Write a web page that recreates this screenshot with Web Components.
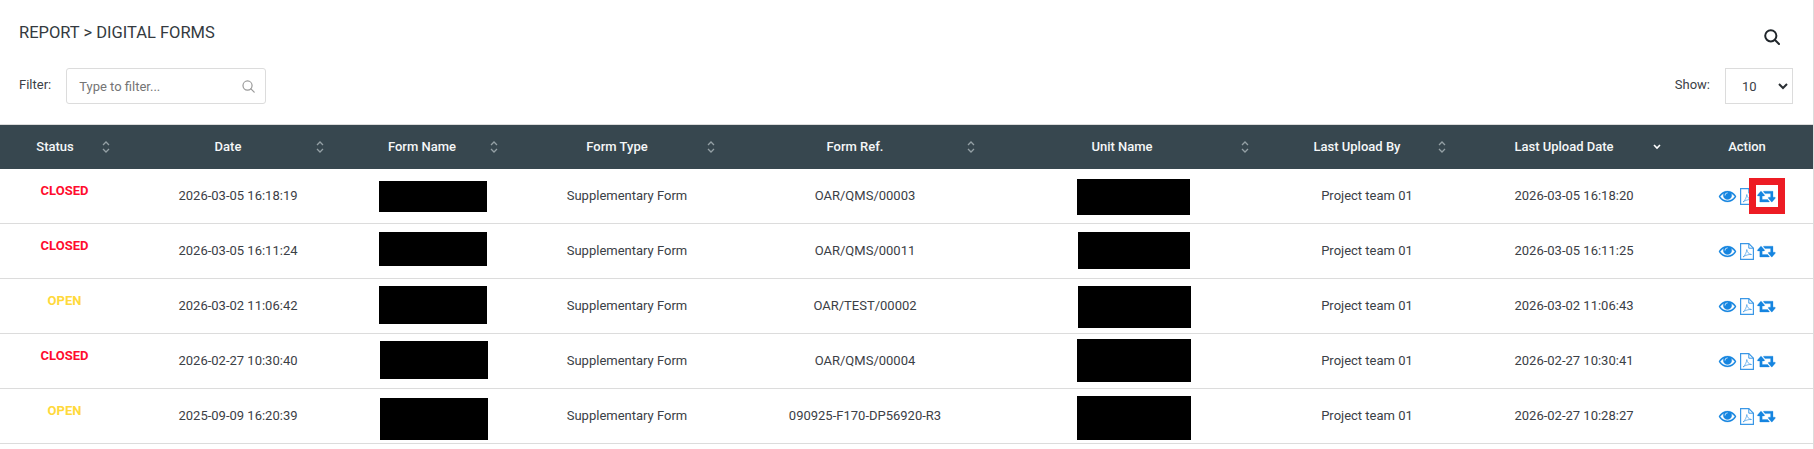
<!DOCTYPE html>
<html lang="en">
<head>
<meta charset="utf-8">
<title>Digital Forms</title>
<style>
html,body{margin:0;background:#fff}
body{font-family:Roboto,"Liberation Sans",sans-serif;color:#3b4046;width:1814px;height:449px;overflow:hidden}
</style>
</head>
<body>
<forms-page></forms-page>
<script>
const ICONS={
 eye:{vb:'0 416 1792 1088',w:17,h:11,sw:30,fill:'M1664 960q-152-236-381-353 61 104 61 225 0 185-131.500 316.500t-316.500 131.500-316.500-131.500-131.500-316.500q0-121 61-225-229 117-381 353 133 205 333.500 326.500t434.500 121.500 434.500-121.500 333.500-326.500zm-720-384q0-20-14-34t-34-14q-125 0-214.500 89.500t-89.500 214.500q0 20 14 34t34 14 34-14 14-34q0-86 61-147t147-61q20 0 34-14t14-34zm848 384q0 34-20 69-140 230-376.500 368.500t-499.500 138.500-499.500-139-376.500-368q-20-35-20-69t20-69q140-229 376.500-368t499.500-139 499.500 139 376.500 368q20 35 20 69z'},
 retweet:{vb:'0 256 1920 1280',w:18,h:12,sw:30,fill:'M1216 1504q0 13-9.500 22.500t-22.500 9.500h-960q-8 0-13.500-2t-9-7-5.500-8-3-11.500-1-11.500v-600h-192q-26 0-45-19t-19-45q0-24 15-41l320-384q19-22 49-22t49 22l320 384q15 17 15 41 0 26-19 45t-45 19h-192v384h576q16 0 25 11l160 192q7 11 7 21zm640-416q0 24-15 41l-320 384q-20 23-49 23t-49-23l-320-384q-15-17-15-41 0-26 19-45t45-19h192v-384h-576q-16 0-25-12l-160-192q-7-9-7-20 0-13 9.500-22.500t22.500-9.500h960q8 0 13.500 2t9 7 5.500 8 3 11.500 1 11.500v600h192q26 0 45 19t19 45z'}
};
class XIcon extends HTMLElement{
 connectedCallback(){
  const n=this.getAttribute('name');
  const r=this.attachShadow({mode:'open'});
  const style='<style>:host{display:inline-flex;flex:none;line-height:0;color:#1585e0}svg{display:block;overflow:visible}</style>';
  if(ICONS[n]){const i=ICONS[n];
   r.innerHTML=style+`<svg width="${i.w}" height="${i.h}" viewBox="${i.vb}" fill="currentColor" stroke="currentColor" stroke-width="${i.sw}"><path d="${i.fill}"/></svg>`;
  }else if(n==='pdf'){
   r.innerHTML=style+`<svg width="14" height="17" viewBox="0 0 14 17" fill="none" stroke="#3a97e6"><path d="M.6.6h8.200l4.600 4.600v11.200H.6z" stroke-width="1.200"/><path d="M8.800.6v4.600h4.600" stroke-width="1"/><path d="M3 14c2-1.500 3.500-4.500 3.800-7.500.3 2.500 1.700 4.500 4.700 5-3-.2-6 .7-8.500 2.500z" stroke-width=".8" stroke-opacity=".85"/></svg>`;
  }else if(n==='search'){
   const c=this.getAttribute('color')||'currentColor',s=this.getAttribute('size')||14,sw=this.getAttribute('sw')||1.6;
   r.innerHTML=`<style>:host{display:inline-flex;line-height:0}svg{display:block}</style><svg width="${s}" height="${s}" viewBox="0 0 16 16" fill="none" stroke="${c}" stroke-width="${sw}" stroke-linecap="round"><circle cx="6.800" cy="6.800" r="5.600"/><path d="M11 11l4 4"/></svg>`;
  }
 }
}
customElements.define('x-icon',XIcon);

class PageHead extends HTMLElement{
 constructor(){super();this.attachShadow({mode:'open'}).innerHTML=`<style>
 :host{display:grid;grid-template-rows:68px 36px;height:124px;box-sizing:border-box;padding:0 20px 0 19px;font-size:13px}
 .top{display:flex;justify-content:space-between;align-items:flex-start}
 h1{margin:20px 0 0;font:400 16.500px/25px Roboto,sans-serif;color:#343a40}
 .tool{margin:29px 13px 0 0;color:#212529}
 .bar{display:flex;justify-content:space-between;align-items:center}
 .grp{display:flex;align-items:center}
 label{color:#3b4046;line-height:36px;position:relative;top:-1px}
 .input{margin-left:15px;width:200px;height:36px;box-sizing:border-box;border:1px solid #dcdcdc;border-radius:3px;display:flex;align-items:center;justify-content:space-between;padding:0 10px 0 12px;color:#757575;font-size:13px}
 .select{margin-left:15px;width:68px;height:36px;box-sizing:border-box;border:1px solid #dcdcdc;display:flex;align-items:center;justify-content:space-between;padding:0 4px 0 16px;font-size:13px;color:#3b4046}
 </style>
 <div class="top"><h1>REPORT &gt; DIGITAL FORMS</h1><div class="tool"><x-icon name="search" size="16" sw="2" color="#20262b"></x-icon></div></div>
 <div class="bar">
  <div class="grp"><label>Filter:</label><div class="input"><span>Type to filter...</span><x-icon name="search" size="13" sw="1.500" color="#9a9a9a"></x-icon></div></div>
  <div class="grp"><label>Show:</label><div class="select"><span>10</span><svg width="10" height="7" viewBox="0 0 10 7" fill="none" stroke="#2a2f33" stroke-width="2"><path d="M1 1l4 4 4-4"/></svg></div></div>
 </div>`}
}
customElements.define('page-head',PageHead);

const COLS='128px 220px 166px 226px 250px 282px 190px 224px 1fr';
class HeadCell extends HTMLElement{
 connectedCallback(){
  const off=this.getAttribute('off'),sort=this.getAttribute('sort'),nudge=this.getAttribute('nudge')||0;
  let ic='';
  if(sort==='both')ic=`<svg class="s" style="right:${off-4}px" width="8" height="14" viewBox="0 0 8 14" fill="none" stroke="#94a0a5" stroke-width="1.300"><path d="M1 5l3-3 3 3M1 9l3 3 3-3"/></svg>`;
  if(sort==='desc')ic=`<svg class="s" style="right:${off-4}px" width="8" height="6" viewBox="0 0 8 6" fill="none" stroke="#fff" stroke-width="1.600"><path d="M1 1l3 3 3-3"/></svg>`;
  this.attachShadow({mode:'open'}).innerHTML=`<style>
  :host{display:block;position:relative;text-align:center;padding-left:${nudge}px;padding-right:${sort?20:0}px;font:500 13px/44px Roboto,sans-serif;color:#f5f7f8}
  .s{position:absolute;top:50%;transform:translateY(-50%)}
  </style><slot></slot>${ic}`;
 }
}
customElements.define('head-cell',HeadCell);

class TableHead extends HTMLElement{
 constructor(){super();this.attachShadow({mode:'open'}).innerHTML=`<style>
 :host{display:grid;grid-template-columns:${COLS};height:44px;background:#37474f;border-top:1px solid #dcdcdc;padding-right:5px}
 </style><slot></slot>`}
}
customElements.define('table-head',TableHead);

class StatusTag extends HTMLElement{
 connectedCallback(){
  const c=this.textContent.trim()==='CLOSED'?'#ff0d2e':'#ffd93b';
  this.attachShadow({mode:'open'}).innerHTML=`<style>:host{display:block;text-align:center;font:700 13px/16px Roboto,sans-serif;color:${c};margin:0 0 11px 1px}</style><slot></slot>`;
 }
}
customElements.define('status-tag',StatusTag);

class RedactBox extends HTMLElement{
 connectedCallback(){
  const [l,t,w,h]=this.getAttribute('box').split(',');
  this.attachShadow({mode:'open'}).innerHTML=`<style>:host{display:block;background:#000;align-self:flex-start;margin:${t}px 0 0 ${l}px;width:${w}px;height:${h}px}</style>`;
 }
}
customElements.define('redact-box',RedactBox);

class ActionIcons extends HTMLElement{
 connectedCallback(){
  const mark=this.hasAttribute('marked')?'<div class="mark"></div>':'';
  this.attachShadow({mode:'open'}).innerHTML=`<style>
  :host{display:flex;align-items:center;align-self:stretch;padding-left:33px;gap:4px;position:relative}
  .mark{position:absolute;left:63px;top:9px;width:36px;height:36px;box-sizing:border-box;border:7px solid #ed1c24}
  </style><x-icon name="eye"></x-icon><x-icon name="pdf"></x-icon><x-icon name="retweet"></x-icon>${mark}`;
 }
}
customElements.define('action-icons',ActionIcons);

class TableCell extends HTMLElement{
 constructor(){super();this.attachShadow({mode:'open'}).innerHTML=`<style>
 :host{display:flex;align-items:center;justify-content:center;font:400 13px/16px Roboto,sans-serif;color:#3b4046;min-width:0}
 ::slotted(redact-box),::slotted(action-icons){margin-right:auto}
 </style><slot></slot>`}
}
customElements.define('table-cell',TableCell);

class TableRow extends HTMLElement{
 constructor(){super();this.attachShadow({mode:'open'}).innerHTML=`<style>
 :host{display:grid;grid-template-columns:${COLS};height:55px;box-sizing:border-box;border-bottom:1px solid #dcdcdc;padding-right:5px}
 ::slotted(table-cell){height:54px}
 </style><slot></slot>`}
}
customElements.define('table-row',TableRow);

const HEAD=[['Status','both',22,2],['Date','both',28,0],['Form Name','both',20,2],['Form Type','both',29,0],['Form Ref.','both',19.5,0],['Unit Name','both',27,2],['Last Upload By','both',20,0],['Last Upload Date','desc',29,0],['Action','',0,0]];
const ROWS=[
 ['CLOSED','2026-03-05 16:18:19','31,12,108,31','OAR/QMS/00003','87,10,113,36','2026-03-05 16:18:20'],
 ['CLOSED','2026-03-05 16:11:24','31,8,108,34','OAR/QMS/00011','88,8,112,37','2026-03-05 16:11:25'],
 ['OPEN','2026-03-02 11:06:42','31,7,108,38','OAR/TEST/00002','88,7,113,42','2026-03-02 11:06:43'],
 ['CLOSED','2026-02-27 10:30:40','32,7,108,38','OAR/QMS/00004','87,5,114,43','2026-02-27 10:30:41'],
 ['OPEN','2025-09-09 16:20:39','32,9,108,42','090925-F170-DP56920-R3','87,7,114,44','2026-02-27 10:28:27']
];
class FormsPage extends HTMLElement{
 constructor(){super();
  const head=HEAD.map(([t,s,o,n])=>`<head-cell sort="${s}" off="${o}" nudge="${n}">${t}</head-cell>`).join('');
  const rows=ROWS.map((r,i)=>`<table-row>
   <table-cell><status-tag>${r[0]}</status-tag></table-cell>
   <table-cell>${r[1]}</table-cell>
   <table-cell><redact-box box="${r[2]}"></redact-box></table-cell>
   <table-cell>Supplementary Form</table-cell>
   <table-cell>${r[3]}</table-cell>
   <table-cell><redact-box box="${r[4]}"></redact-box></table-cell>
   <table-cell>Project team 01</table-cell>
   <table-cell>${r[5]}</table-cell>
   <table-cell><action-icons ${i===0?'marked':''}></action-icons></table-cell>
  </table-row>`).join('');
  this.attachShadow({mode:'open'}).innerHTML=`<style>
  :host{display:block;width:1814px;height:449px;box-sizing:border-box;border-right:1px solid #dcdcdc;background:#fff}
  </style><page-head></page-head><table-head>${head}</table-head>${rows}`;
 }
}
customElements.define('forms-page',FormsPage);
</script>
</body>
</html>
